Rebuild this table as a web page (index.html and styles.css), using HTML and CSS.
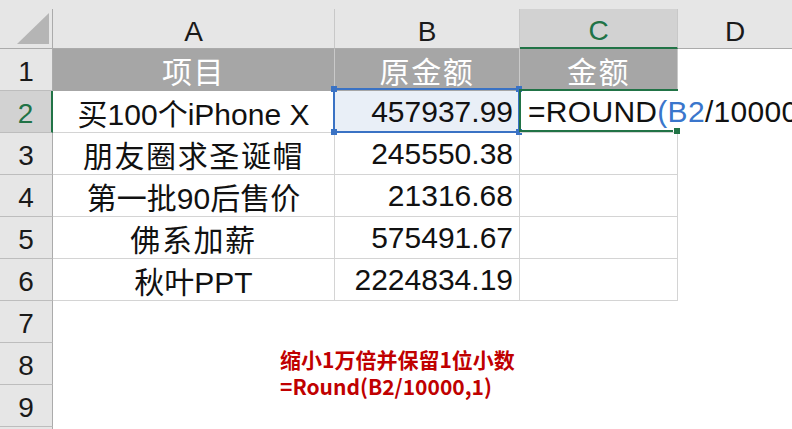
FILE: index.html
```html
<!DOCTYPE html>
<html>
<head>
<meta charset="utf-8">
<link rel="stylesheet" href="styles.css">
</head>
<body>
<div class="sheet">
  <div class="strip"></div>
  <div class="grid">
    <div class="corner"><svg width="52" height="39" viewBox="0 0 52 39"><polygon points="17,35 49,35 49,4" fill="#b5b5b5"/></svg></div>
    <div class="ch">A</div>
    <div class="ch">B</div>
    <div class="ch active">C</div>
    <div class="ch last">D</div>

    <div class="rh">1</div>
    <div class="cell head cjk">项目</div>
    <div class="cell head cjk">原金额</div>
    <div class="cell head cjk">金额</div>
    <div class="blank"></div>

    <div class="rh active">2</div>
    <div class="cell center">买100个iPhone X</div>
    <div class="cell num selfill">457937.99</div>
    <div class="cell edit">=ROUND<span class="ref">(B2</span>/10000</div>
    <div class="blank"></div>

    <div class="rh">3</div>
    <div class="cell center cjk">朋友圈求圣诞帽</div>
    <div class="cell num">245550.38</div>
    <div class="cell"></div>
    <div class="blank"></div>

    <div class="rh">4</div>
    <div class="cell center">第一批90后售价</div>
    <div class="cell num">21316.68</div>
    <div class="cell"></div>
    <div class="blank"></div>

    <div class="rh">5</div>
    <div class="cell center cjk">佛系加薪</div>
    <div class="cell num">575491.67</div>
    <div class="cell"></div>
    <div class="blank"></div>

    <div class="rh">6</div>
    <div class="cell center">秋叶PPT</div>
    <div class="cell num">2224834.19</div>
    <div class="cell"></div>
    <div class="blank"></div>

    <div class="rh">7</div>
    <div class="blank rest"></div>
    <div class="rh">8</div>
    <div class="blank rest"></div>
    <div class="rh">9</div>
    <div class="blank rest"></div>
    <div class="rh"></div>
    <div class="blank rest"></div>
  </div>

  <div class="selbox">
    <span class="hd tl"></span><span class="hd tr"></span><span class="hd bl"></span><span class="hd br"></span>
  </div>
  <div class="eb eb-left"></div>
  <div class="eb eb-top"></div>
  <div class="eb eb-bottom"></div>
  <div class="eb eb-handle"></div>

  <div class="note">
    <div>缩小1万倍并保留1位小数</div>
    <div>=Round(B2/10000,1)</div>
  </div>
</div>
</body>
</html>
```

FILE: styles.css
```css
* { box-sizing: border-box; }
html, body { margin: 0; padding: 0; background: #fff; }

.sheet {
  position: relative;
  width: 792px;
  height: 429px;
  overflow: hidden;
  background: #fff;
}

.strip {
  height: 9px;
  background: #e6e6e6;
}

.grid {
  display: grid;
  grid-template-columns: 53px 282px 185px 158px 1fr;
  grid-template-rows: 40px repeat(10, 42px);
}

.corner {
  background: #e6e6e6;
  border-right: 1px solid #ababab;
  border-bottom: 1px solid #ababab;
}
.corner svg { display: block; }

.ch {
  background: #e6e6e6;
  border-right: 1px solid #c8c8c8;
  border-bottom: 1px solid #ababab;
  display: flex;
  justify-content: center;
  align-items: center;
  padding-top: 6px;
  font: 28px "Liberation Sans", sans-serif;
  color: #1a1a1a;
}
.ch.active {
  background: #d2d2d2;
  color: #217346;
  border-bottom: 2px solid #217346;
}
.ch.last { border-right: none; }

.rh {
  background: #e6e6e6;
  border-right: 1px solid #ababab;
  border-bottom: 1px solid #bdbdbd;
  display: flex;
  justify-content: center;
  align-items: center;
  padding-top: 5px;
  font: 28px "Liberation Sans", sans-serif;
  color: #1a1a1a;
}
.rh.active {
  background: #d2d2d2;
  color: #217346;
  border-right: 2px solid #217346;
}

.cell {
  border-right: 1px solid #d4d4d4;
  border-bottom: 1px solid #d4d4d4;
  display: flex;
  align-items: center;
  font: 30px "Liberation Sans", "Noto Sans CJK SC", sans-serif;
  color: #111;
  white-space: nowrap;
}
.center { justify-content: center; }
.cjk { letter-spacing: 1.6px; }
.num { justify-content: flex-end; padding-right: 6px; }
.head {
  background: #a6a6a6;
  color: #fff;
  justify-content: center;
  border-right-color: #c9c9c9;
  border-bottom-color: #a6a6a6;
}
.selfill { background: #e9eff7; }
.edit {
  position: relative;
  z-index: 1;
  border-right: none;
  padding-left: 8px;
  overflow: visible;
  letter-spacing: 0.3px;
}
.ref { color: #3a76cc; }

.rest { grid-column: 2 / span 4; }

.selbox {
  position: absolute;
  left: 333px;
  top: 88px;
  width: 187px;
  height: 45px;
  border: 2px solid #3a72c4;
}
.hd {
  position: absolute;
  width: 6px;
  height: 6px;
  background: #3a72c4;
}
.hd.tl { left: -4px; top: -4px; }
.hd.tr { right: -4px; top: -4px; }
.hd.bl { left: -4px; bottom: -4px; }
.hd.br { right: -4px; bottom: -4px; }

.eb { position: absolute; background: #217346; z-index: 2; }
.eb-left { left: 519px; top: 89px; width: 2px; height: 43px; }
.eb-top { left: 519px; top: 89px; width: 159px; height: 2px; }
.eb-bottom { left: 519px; top: 130px; width: 154px; height: 2px; }
.eb-handle { left: 674px; top: 128px; width: 6px; height: 6px; }

.note {
  position: absolute;
  left: 280px;
  top: 346px;
  color: #c00000;
  font: bold 21px/27px "Noto Sans CJK SC", sans-serif;
}
```
